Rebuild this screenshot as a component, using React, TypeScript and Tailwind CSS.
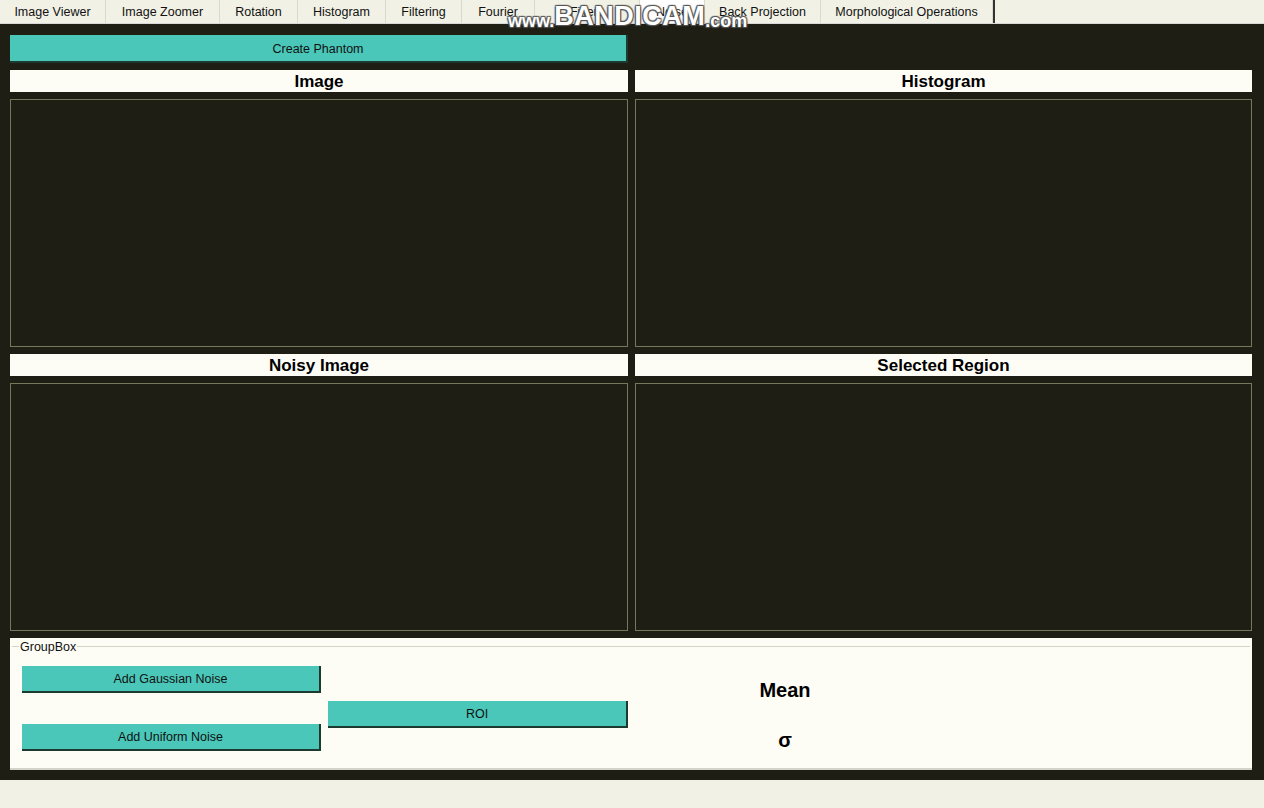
import React from "react";

const tabs = [
  { label: "Image Viewer", w: 106 },
  { label: "Image Zoomer", w: 114 },
  { label: "Rotation", w: 78 },
  { label: "Histogram", w: 88 },
  { label: "Filtering", w: 76 },
  { label: "Fourier", w: 73 },
  { label: "Filters", w: 105 },
  { label: "Noise", w: 65, active: true },
  { label: "Back Projection", w: 116 },
  { label: "Morphological Operations", w: 172 },
];

function TealButton({ label, className }: { label: string; className: string }) {
  return (
    <button
      className={`flex items-center justify-center pt-[2px] bg-[#4ac7b9] text-[12.5px] text-[#111] border-r-2 border-b-2 border-[#1d3a30] ${className}`}
    >
      {label}
    </button>
  );
}

function Title({ label }: { label: string }) {
  return (
    <div className="h-[22px] bg-[#fdfdf6] flex items-center justify-center pt-[1px] text-[17px] font-bold text-black leading-none">
      {label}
    </div>
  );
}

function Panel() {
  return <div className="h-[248px] border border-[#77775c] bg-[#1e1e15]" />;
}

export default function App() {
  return (
    <div
      className="relative w-[1264px] h-[808px] bg-[#f1f1e6] overflow-hidden"
      style={{ fontFamily: "'Liberation Sans', Arial, sans-serif" }}
    >
      {/* tab bar */}
      <div className="h-[24px] flex items-start border-b border-[#d8d8d8]">
        <div className="flex h-[23px] border-r-2 border-[#333]">
          {tabs.map((t) => (
            <div
              key={t.label}
              style={{ width: t.w }}
              className={`flex items-center justify-center pt-[2px] text-[12.5px] text-[#111] border-r border-[#d9d9cc] ${
                t.active ? "bg-white" : ""
              }`}
            >
              {t.label}
            </div>
          ))}
        </div>
      </div>

      {/* main dark area */}
      <div className="h-[756px] bg-[#1e1e15] px-[10px] pt-[11px]">
        <div className="flex">
          <TealButton label="Create Phantom" className="w-[618px] h-[28px]" />
        </div>

        <div className="grid grid-cols-[618px_617px] gap-x-[7px] mt-[7px]">
          <div className="flex flex-col gap-[7px]">
            <Title label="Image" />
            <Panel />
          </div>
          <div className="flex flex-col gap-[7px]">
            <Title label="Histogram" />
            <Panel />
          </div>
          <div className="flex flex-col gap-[7px] mt-[7px]">
            <Title label="Noisy Image" />
            <Panel />
          </div>
          <div className="flex flex-col gap-[7px] mt-[7px]">
            <Title label="Selected Region" />
            <Panel />
          </div>
        </div>

        {/* group box */}
        <div className="mt-[7px] w-[1242px] h-[132px] bg-[#fdfdf6] border-b-2 border-[#d4d4c8] relative">
          <div className="absolute left-[2px] right-[2px] top-[8px] border-t border-[#d4d4c4]" />
          <div className="absolute left-[9px] top-[2px] px-[1px] bg-[#fdfdf6] text-[12.5px] text-[#111] leading-[14px]">
            GroupBox
          </div>
          <div className="flex pt-[28px] pl-[12px]">
            <div className="flex flex-col gap-[31px]">
              <TealButton label="Add Gaussian Noise" className="w-[299px] h-[27px]" />
              <TealButton label="Add Uniform Noise" className="w-[299px] h-[27px]" />
            </div>
            <div className="ml-[7px] pt-[35px]">
              <TealButton label="ROI" className="w-[300px] h-[27px]" />
            </div>
            <div className="ml-[100px] w-[114px] flex flex-col items-center pt-[14px] gap-[30px] text-[20px] font-bold text-black leading-none">
              <div>Mean</div>
              <div>σ</div>
            </div>
          </div>
        </div>
      </div>

      {/* watermark */}
      <div
        className="absolute left-[508px] top-[3px] flex items-end font-bold text-white leading-none"
        style={{
          fontFamily: "'Liberation Sans', Arial, sans-serif",
          textShadow: "1px 1px 1px #555, -1px -1px 1px #555, 1px -1px 1px #555, -1px 1px 1px #555",
        }}
      >
        <span className="text-[18px]">www.</span>
        <span className="text-[27px] tracking-[0.5px]">BANDICAM</span>
        <span className="text-[18px]">.com</span>
      </div>
    </div>
  );
}
